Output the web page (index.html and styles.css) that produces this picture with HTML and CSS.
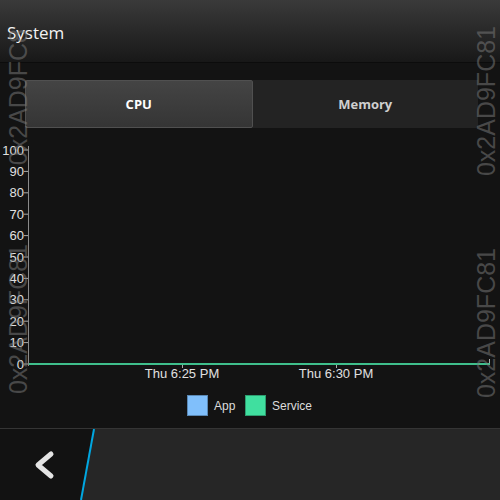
FILE: index.html
```html
<!DOCTYPE html>
<html lang="en">
  <head>
    <meta charset="UTF-8" />
    <meta name="viewport" content="width=device-width, initial-scale=1.0" />
    <title>System</title>
    <link rel="stylesheet" href="styles.css">
  </head>
  <body>
    <div class="screen">
      <div class="title-bar">
        <h1 class="title">System</h1>
      </div>

      <div class="tab-strip">
        <div class="tabs">
          <div class="tab tab-active">CPU</div>
          <div class="tab">Memory</div>
        </div>
      </div>

      <div class="chart">
        <svg class="chart-svg" width="500" height="300" viewBox="0 0 500 300">
          <!-- y axis -->
          <line class="axis" x1="28.5" y1="18" x2="28.5" y2="238" />
          <g class="ticks">
            <line x1="24" y1="22" x2="28" y2="22" />
            <line x1="24" y1="43.4" x2="28" y2="43.4" />
            <line x1="24" y1="64.8" x2="28" y2="64.8" />
            <line x1="24" y1="86.2" x2="28" y2="86.2" />
            <line x1="24" y1="107.6" x2="28" y2="107.6" />
            <line x1="24" y1="129" x2="28" y2="129" />
            <line x1="24" y1="150.4" x2="28" y2="150.4" />
            <line x1="24" y1="171.8" x2="28" y2="171.8" />
            <line x1="24" y1="193.2" x2="28" y2="193.2" />
            <line x1="24" y1="214.6" x2="28" y2="214.6" />
            <line x1="24" y1="236" x2="28" y2="236" />
            <line x1="182.5" y1="236" x2="182.5" y2="240" />
            <line x1="336.5" y1="236" x2="336.5" y2="240" />
            <line x1="489.5" y1="231" x2="489.5" y2="236" />
          </g>
          <g class="y-labels">
            <text x="24" y="26.5">100</text>
            <text x="24" y="47.9">90</text>
            <text x="24" y="69.3">80</text>
            <text x="24" y="90.7">70</text>
            <text x="24" y="112.1">60</text>
            <text x="24" y="133.5">50</text>
            <text x="24" y="154.9">40</text>
            <text x="24" y="176.3">30</text>
            <text x="24" y="197.7">20</text>
            <text x="24" y="219.1">10</text>
            <text x="24" y="240.5">0</text>
          </g>
          <g class="x-labels">
            <text x="182" y="250">Thu 6:25 PM</text>
            <text x="336" y="250">Thu 6:30 PM</text>
          </g>
          <!-- data -->
          <line class="series-service" x1="29" y1="236" x2="490" y2="236" />
          <!-- legend -->
          <rect class="swatch-app" x="187.5" y="267.5" width="20" height="20" />
          <text class="legend-label" x="214" y="282">App</text>
          <rect class="swatch-service" x="245.5" y="267.5" width="20" height="20" />
          <text class="legend-label" x="272" y="282">Service</text>
        </svg>
      </div>

      <div class="action-bar">
        <svg class="action-svg" width="500" height="71" viewBox="0 0 500 71">
          <polygon class="back-area" points="0,0 94,0 81,71 0,71" />
          <line class="divider" x1="94" y1="0" x2="81" y2="71" />
          <polyline class="back-icon" points="51,25 38,36 51,47" />
        </svg>
      </div>

      <div class="watermark wm-left-top">0x2AD9FC8</div>
      <div class="watermark wm-left-bottom">0x2AD9FC81</div>
      <div class="watermark wm-right-top">0x2AD9FC81</div>
      <div class="watermark wm-right-bottom">0x2AD9FC81</div>
    </div>
  </body>
</html>
```

FILE: styles.css
```css
body {
  margin: 0;
  padding: 0;
  background-color: #131313;
  font-family: "Liberation Sans", Arial, sans-serif;
}
.screen {
  position: relative;
  width: 500px;
  height: 500px;
  overflow: hidden;
  display: flex;
  flex-direction: column;
  background-color: #131313;
}
.title-bar {
  height: 62px;
  background: linear-gradient(#3a3a3a, #2c2c2c 40%, #181818);
  border-bottom: 1px solid #0c0c0c;
}
.title {
  margin: 0;
  padding: 21px 0 0 7px;
  font-family: "Open Sans", "Liberation Sans", sans-serif;
  font-weight: normal;
  font-size: 17px;
  color: #f2f2f2;
}
.tab-strip {
  padding: 17px 22px 0 25px;
  height: 48px;
}
.tabs {
  display: flex;
  height: 48px;
  background-color: #232323;
}
.tab {
  flex: 1;
  display: flex;
  align-items: center;
  justify-content: center;
  font-family: "Open Sans", "Liberation Sans", sans-serif;
  font-weight: bold;
  font-size: 13px;
  color: #cfcfcf;
}
.tab-active {
  color: #fff;
  background: linear-gradient(#444, #353535);
  border: 1px solid #505050;
  border-radius: 2px;
  box-sizing: border-box;
}
.chart {
  flex: 1;
}
.chart-svg {
  display: block;
}
.axis {
  stroke: #8a8a8a;
  stroke-width: 1;
}
.ticks line {
  stroke: #aaa;
  stroke-width: 1;
}
.y-labels text {
  font-size: 13px;
  fill: #e0e0e0;
  text-anchor: end;
}
.x-labels text {
  font-size: 13px;
  fill: #e0e0e0;
  text-anchor: middle;
}
.series-service {
  stroke: #3fbf8c;
  stroke-width: 2;
}
.swatch-app {
  fill: #80bffb;
  stroke: #5a88b4;
}
.swatch-service {
  fill: #40df9f;
  stroke: #2d9d70;
}
.legend-label {
  font-size: 12px;
  fill: #dcdcdc;
}
.action-bar {
  height: 71px;
  background-color: #262626;
  border-top: 1px solid #353535;
}
.action-svg {
  display: block;
}
.back-area {
  fill: #121212;
}
.divider {
  stroke: #00a7e1;
  stroke-width: 2;
}
.back-icon {
  fill: none;
  stroke: #e4e4e4;
  stroke-width: 5;
  stroke-linecap: round;
  stroke-linejoin: round;
}
.watermark {
  position: absolute;
  writing-mode: vertical-rl;
  transform: rotate(180deg);
  font-family: "Liberation Sans", Arial, sans-serif;
  font-size: 25px;
  line-height: 24px;
  color: rgba(125, 125, 125, 0.5);
  white-space: nowrap;
}
.wm-left-top {
  left: 6px;
  top: 29px;
}
.wm-left-bottom {
  left: 6px;
  top: 244px;
}
.wm-right-top {
  left: 474px;
  top: 26px;
}
.wm-right-bottom {
  left: 474px;
  top: 248px;
}
```
